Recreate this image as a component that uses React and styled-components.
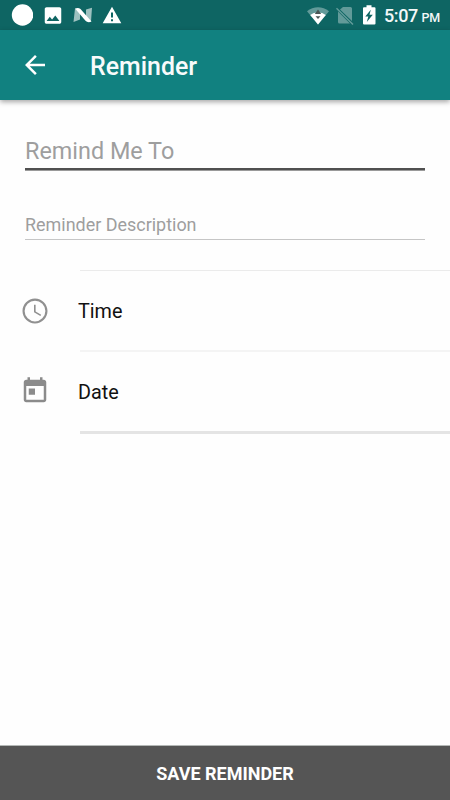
import React, { useState } from "react";
import styled, { createGlobalStyle } from "styled-components";

function App() {
  const [formData, setFormData] = useState({ title: "", description: "" });

  const handleChange = (e) => {
    const { name, value } = e.target;
    setFormData((prev) => ({ ...prev, [name]: value }));
  };

  return (
    <>
      <GlobalStyle />
      <Screen>
        <StatusBar>
          <StatusIcons>
            <svg width="22" height="22" viewBox="0 0 22 22">
              <circle cx="11.500" cy="11" r="10.700" fill="#fff" />
            </svg>
            <svg width="22" height="22" viewBox="0 0 24 24">
              <path fill="#fff" d="M21 19.500V5.500c0-1.100-.9-2-2-2H5c-1.100 0-2 .9-2 2v14c0 1.100.9 2 2 2h14c1.100 0 2-.9 2-2zM8.500 14l2.500 3.010L14.500 12.500l4.500 6H5l3.500-4.500z" />
            </svg>
            <svg width="20" height="22" viewBox="0 0 20 22">
              <path fill="#fff" fillOpacity=".6" d="M2 4.500L7 8v7.500L.5 18zM19 3.800l-6 1.700V15l5 2.500z" />
              <path fill="#fff" d="M2 4.500C4 3.600 6 3.600 7.500 5L18.500 17.500c-2 1-4.500 1-6-.7z" />
            </svg>
            <svg width="20" height="22" viewBox="0 0 20 22">
              <path fill="#fff" fillRule="evenodd" d="M.7 19.200L10 2.700l9.300 16.500zM9 8.500v5h2v-5zM9 15.300v2h2v-2z" />
            </svg>
          </StatusIcons>
          <StatusIcons $end>
            <svg width="24" height="22" viewBox="0 0 24 22">
              <path fill="#fff" fillOpacity=".35" d="M1 7.200C7.500 2 16.500 2 23 7.200L12 20.500z" />
              <path fill="#fff" d="M4.200 11c4.500-3.300 11.100-3.300 15.600 0L12 20.500z" />
              <path fill="#4a5656" d="M8.800 10L12 5.500l3.200 4.500zM9.500 12.200h5L12 15z" />
            </svg>
            <svg width="20" height="22" viewBox="0 0 20 22">
              <path fill="#fff" fillOpacity=".35" d="M8 3h7.500q1.500 0 1.500 1.500V17L5 5.500zM3 7.500L15 19.500H4.500Q3 19.500 3 18z" />
              <path stroke="#fff" strokeOpacity=".35" strokeWidth="1.500" d="M1.500 4.200L18 20.500" />
            </svg>
            <BatteryIcon width="14" height="22" viewBox="0 0 14 22">
              <path fill="#fff" fillRule="evenodd" d="M4.500 1.200h5v2H12.500q1 0 1 1V19.500q0 1-1 1H2q-1 0-1-1V4.200q0-1 1-1h2.500zM8.800 5.800l-5.500 6.700h3l-1.500 5.500 6-7.200H7.500z" />
            </BatteryIcon>
            <Clock>
              5:07 <Period>PM</Period>
            </Clock>
          </StatusIcons>
        </StatusBar>

        <AppBar>
          <BackButton aria-label="Back">
            <svg width="30" height="30" viewBox="0 0 24 24">
              <path fill="#fff" d="M20 11H7.830l5.590-5.590L12 4l-8 8 8 8 1.410-1.410L7.830 13H20v-2z" />
            </svg>
          </BackButton>
          <Title>Reminder</Title>
        </AppBar>

        <Form>
          <TitleInput
            name="title"
            value={formData.title}
            onChange={handleChange}
            placeholder="Remind Me To"
          />
          <DescriptionInput
            name="description"
            value={formData.description}
            onChange={handleChange}
            placeholder="Reminder Description"
          />
        </Form>

        <Rows>
          <Row $height={80}>
            <RowIcon>
              <svg width="30" height="30" viewBox="0 0 24 24" fill="#909090">
                <path d="M11.990 2C6.470 2 2 6.480 2 12s4.470 10 9.990 10C17.520 22 22 17.520 22 12S17.520 2 11.990 2zM12 20.300a8.300 8.300 0 1 1 0-16.600 8.300 8.300 0 0 1 0 16.600z" />
                <path d="M12.500 7H11.200v6l5.100 3.050.65-1.080-4.450-2.670z" />
              </svg>
            </RowIcon>
            <RowBody $line="1px solid #ebebeb">Time</RowBody>
          </Row>
          <Row $height={81}>
            <RowIcon>
              <svg width="30" height="30" viewBox="0 0 24 24" fill="#8b8b8b">
                <path d="M19 3h-1V1h-2v2H8V1H6v2H5c-1.110 0-1.990.9-1.990 2L3 19c0 1.100.89 2 2 2h14c1.100 0 2-.9 2-2V5c0-1.100-.9-2-2-2zm0 16H5V8h14v11zM7 10h5v5H7z" />
              </svg>
            </RowIcon>
            <RowBody $line="2px solid #f4f4f4">Date</RowBody>
          </Row>
          <EndLine />
        </Rows>

        <SaveButton type="button">Save Reminder</SaveButton>
      </Screen>
    </>
  );
}

export default App;

const Screen = styled.div`
  width: 450px;
  height: 800px;
  display: flex;
  flex-direction: column;
  background-color: #fefefe;
  overflow: hidden;
`;

const StatusBar = styled.div`
  height: 30px;
  flex-shrink: 0;
  display: flex;
  align-items: center;
  justify-content: space-between;
  padding: 0 10px 0 11px;
  background-color: #0e6563;
`;

const StatusIcons = styled.div`
  display: flex;
  align-items: center;
  gap: ${(props) => (props.$end ? "5px" : "9px")};

  svg {
    display: block;
  }
`;

const BatteryIcon = styled.svg`
  margin-left: 2px;
`;

const Clock = styled.span`
  width: 59px;
  color: #f3f8f8;
  font-size: 18px;
  font-weight: 500;
  line-height: 30px;
  white-space: nowrap;
  padding: 3px 0 0 3px;
  letter-spacing: -0.4px;
`;

const Period = styled.span`
  margin-left: -0.5px;
  font-size: 12.5px;
  letter-spacing: -0.2px;
`;

const AppBar = styled.header`
  height: 70px;
  flex-shrink: 0;
  display: flex;
  align-items: center;
  background-color: #118180;
  box-shadow: 0 2px 5px rgba(0, 0, 0, 0.35);
`;

const BackButton = styled.button`
  width: 70px;
  height: 70px;
  padding: 0;
  border: none;
  background: none;
  display: flex;
  align-items: center;
  justify-content: center;
`;

const Title = styled.h1`
  margin: 0;
  padding: 4px 0 0 20px;
  color: #f8fbfb;
  font-size: 24.9px;
  font-weight: 500;
  line-height: 30px;
`;

const Form = styled.form`
  display: flex;
  flex-direction: column;
  padding: 31px 25px 0;
`;

const Input = styled.input`
  width: 100%;
  padding: 0;
  border: none;
  border-radius: 0;
  outline: 0;
  background: transparent;
  color: #000;

  &::placeholder {
    color: #9e9e9e;
    opacity: 1;
  }
`;

const TitleInput = styled(Input)`
  height: 39px;
  padding-top: 2px;
  font-size: 23.4px;
  border-bottom: 2px solid #505050;
  box-shadow: 0 1px #9a9a9a;
`;

const DescriptionInput = styled(Input)`
  height: 30px;
  margin-top: 40px;
  font-size: 17.95px;
  border-bottom: 1px solid #c6c6c6;
`;

const Rows = styled.div`
  flex: 1;
  padding-top: 30px;
`;

const Row = styled.div`
  height: ${(props) => props.$height}px;
  display: flex;
`;

const RowIcon = styled.div`
  width: 80px;
  padding: 26px 0 0 20px;
`;

const RowBody = styled.div`
  flex: 1;
  border-top: ${(props) => props.$line};
  color: #111;
  font-size: 19.8px;
  line-height: 82px;
  text-indent: -2px;
`;

const EndLine = styled.div`
  height: 3px;
  margin-left: 80px;
  background-color: #e4e4e4;
`;

const SaveButton = styled.button`
  height: 55px;
  flex-shrink: 0;
  padding: 0;
  border: none;
  border-top: 1px solid #b4b8b6;
  background-color: #555;
  color: #fff;
  font-size: 18px;
  font-weight: 700;
  text-transform: uppercase;
`;

const GlobalStyle = createGlobalStyle`
  * {
    box-sizing: border-box;
  }

  body {
    margin: 0;
    font-family: Roboto, sans-serif;
  }

  input,
  button {
    font-family: inherit;
  }
`;
